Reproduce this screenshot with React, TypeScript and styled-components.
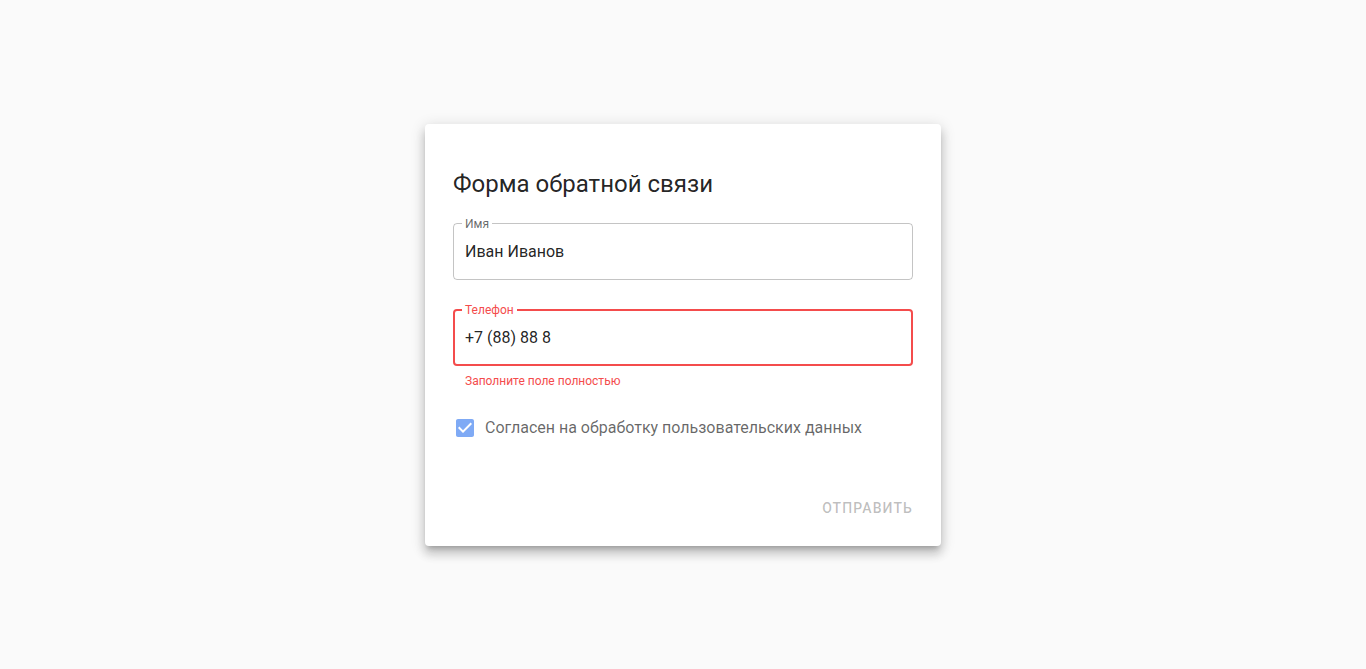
import React from 'react';
import styled, { createGlobalStyle, css } from 'styled-components';

const colors = {
  page: '#fafafa',
  text: 'rgba(0, 0, 0, 0.87)',
  muted: 'rgba(0, 0, 0, 0.6)',
  line: 'rgba(0, 0, 0, 0.23)',
  error: '#f44c4c',
  check: '#7faaf5',
  disabled: 'rgba(0, 0, 0, 0.26)',
};

const GlobalStyle = createGlobalStyle`
  * { box-sizing: border-box; }
  html, body {
    margin: 0;
    padding: 0;
    background: ${colors.page};
    font-family: Roboto, "Noto Sans", "Liberation Sans", sans-serif;
  }
`;

const Page = styled.div`
  min-height: 100vh;
  display: flex;
  align-items: center;
  justify-content: center;
`;

const Card = styled.form`
  width: 516px;
  padding: 44px 28px 20px;
  background: #fff;
  border-radius: 4px;
  box-shadow: 0 5px 5px -3px rgba(0, 0, 0, 0.2), 0 8px 10px 1px rgba(0, 0, 0, 0.14),
    0 3px 14px 2px rgba(0, 0, 0, 0.12);
  display: flex;
  flex-direction: column;
`;

const Title = styled.h2`
  margin: 0 0 24px;
  font-size: 24px;
  font-weight: 400;
  line-height: 32px;
  color: ${colors.text};
`;

const Field = styled.div<{ $gap?: number }>`
  margin-bottom: ${({ $gap }) => $gap ?? 0}px;
`;

const Box = styled.label`
  position: relative;
  display: block;
  height: 56px;
`;

const Outline = styled.fieldset<{ $error?: boolean }>`
  position: absolute;
  top: -7px;
  left: 0;
  right: 0;
  bottom: 0;
  margin: 0;
  padding: 0 8px;
  border-radius: 4px;
  pointer-events: none;
  ${({ $error }) =>
    $error
      ? css`
          border: 2px solid ${colors.error};
          padding: 0 7px;
        `
      : css`
          border: 1px solid ${colors.line};
        `}
`;

const Legend = styled.legend<{ $error?: boolean }>`
  padding: 0 3px 0 3px;
  font-size: 12px;
  line-height: 14px;
  color: ${({ $error }) => ($error ? colors.error : colors.muted)};
`;

const Input = styled.input`
  width: 100%;
  height: 56px;
  padding: 0 12px;
  border: 0;
  outline: none;
  background: transparent;
  font-family: inherit;
  font-size: 16px;
  color: ${colors.text};
`;

const Helper = styled.p`
  margin: 5px 12px 0;
  font-size: 12px;
  line-height: 20px;
  color: ${colors.error};
`;

const CheckRow = styled.label`
  display: flex;
  align-items: center;
  margin-top: 16px;
  margin-left: -9px;
  height: 42px;
  cursor: pointer;
`;

const CheckWrap = styled.span`
  width: 42px;
  height: 42px;
  display: flex;
  align-items: center;
  justify-content: center;
`;

const CheckLabel = styled.span`
  font-size: 16px;
  color: ${colors.muted};
  margin-left: -1px;
`;

const Actions = styled.div`
  display: flex;
  justify-content: flex-end;
  margin: 41px -8px 0 0;
`;

const SubmitButton = styled.button`
  height: 36px;
  padding: 6px 8px;
  border: 0;
  background: transparent;
  font-family: inherit;
  font-size: 14px;
  font-weight: 500;
  letter-spacing: 1.1px;
  text-transform: uppercase;
  color: ${colors.disabled};
`;

const CheckIcon = () => (
  <svg width="24" height="24" viewBox="0 0 24 24">
    <path
      fill={colors.check}
      d="M19 3H5c-1.11 0-2 .9-2 2v14c0 1.1.89 2 2 2h14c1.11 0 2-.9 2-2V5c0-1.1-.89-2-2-2zm-9 14l-5-5 1.41-1.41L10 14.17l7.59-7.59L19 8l-9 9z"
    />
  </svg>
);

interface TextFieldProps {
  label: string;
  value: string;
  error?: boolean;
  gap?: number;
  helper?: string;
}

const TextField = ({ label, value, error, gap, helper }: TextFieldProps) => (
  <Field $gap={gap}>
    <Box>
      <Input defaultValue={value} />
      <Outline $error={error}>
        <Legend $error={error}>{label}</Legend>
      </Outline>
    </Box>
    {helper && <Helper>{helper}</Helper>}
  </Field>
);

const App = () => {
  return (
    <>
      <GlobalStyle />
      <Page>
        <Card onSubmit={(e) => e.preventDefault()}>
          <Title>Форма обратной связи</Title>
          <TextField label="Имя" value="Иван Иванов" gap={30} />
          <TextField label="Телефон" value="+7 (88) 88 8" error helper="Заполните поле полностью" />
          <CheckRow>
            <CheckWrap>
              <CheckIcon />
            </CheckWrap>
            <CheckLabel>Согласен на обработку пользовательских данных</CheckLabel>
          </CheckRow>
          <Actions>
            <SubmitButton type="submit" disabled>
              Отправить
            </SubmitButton>
          </Actions>
        </Card>
      </Page>
    </>
  );
};

export default App;
